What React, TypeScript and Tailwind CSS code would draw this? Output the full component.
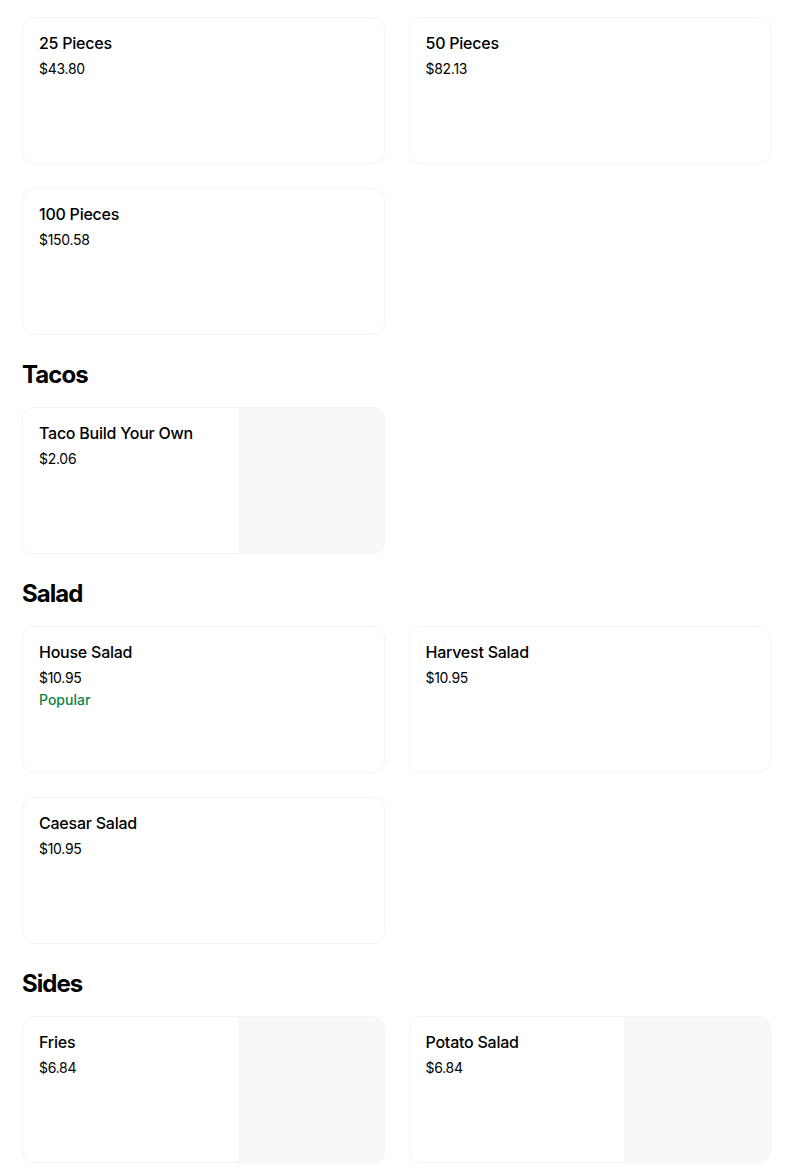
import React from "react";

interface Item {
  name: string;
  price: string;
  popular?: boolean;
  image?: boolean;
}

interface Section {
  title?: string;
  items: Item[];
}

const sections: Section[] = [
  {
    items: [
      { name: "25 Pieces", price: "$43.80" },
      { name: "50 Pieces", price: "$82.13" },
      { name: "100 Pieces", price: "$150.58" },
    ],
  },
  {
    title: "Tacos",
    items: [{ name: "Taco Build Your Own", price: "$2.06", image: true }],
  },
  {
    title: "Salad",
    items: [
      { name: "House Salad", price: "$10.95", popular: true },
      { name: "Harvest Salad", price: "$10.95" },
      { name: "Caesar Salad", price: "$10.95" },
    ],
  },
  {
    title: "Sides",
    items: [
      { name: "Fries", price: "$6.84", image: true },
      { name: "Potato Salad", price: "$6.84", image: true },
    ],
  },
];

function ItemCard({ item }: { item: Item }) {
  return (
    <div className="flex h-[147px] overflow-hidden rounded-xl border border-[#f3f3f3] bg-white">
      <div className="flex-1 pl-[16px] pr-3 pt-[13px]">
        <div className="text-[16px] font-medium leading-6 tracking-[-0.015em] text-black">{item.name}</div>
        <div className="mt-[4px] text-[14px] leading-5 tracking-[-0.02em] text-black">{item.price}</div>
        {item.popular && (
          <div className="mt-[2px] text-[14px] font-medium leading-5 text-[#0e8345]">Popular</div>
        )}
      </div>
      {item.image && <div className="w-[146px] shrink-0 bg-[#f8f8f8]" />}
    </div>
  );
}

export default function App() {
  return (
    <div
      className="min-h-[1170px] bg-white pl-[22px] pt-[17px]"
      style={{ fontFamily: "Inter, 'Noto Sans', sans-serif" }}
    >
      <div className="w-[749px]">
        {sections.map((section, i) => (
          <div key={i}>
            {section.title && (
              <h2 className="mb-[16px] mt-[24px] h-8 text-[24px] font-bold leading-8 tracking-[-0.04em] text-black">
                {section.title}
              </h2>
            )}
            <div className="grid grid-cols-2 gap-x-6 gap-y-[24px]">
              {section.items.map((item) => (
                <ItemCard key={item.name} item={item} />
              ))}
            </div>
          </div>
        ))}
      </div>
    </div>
  );
}
